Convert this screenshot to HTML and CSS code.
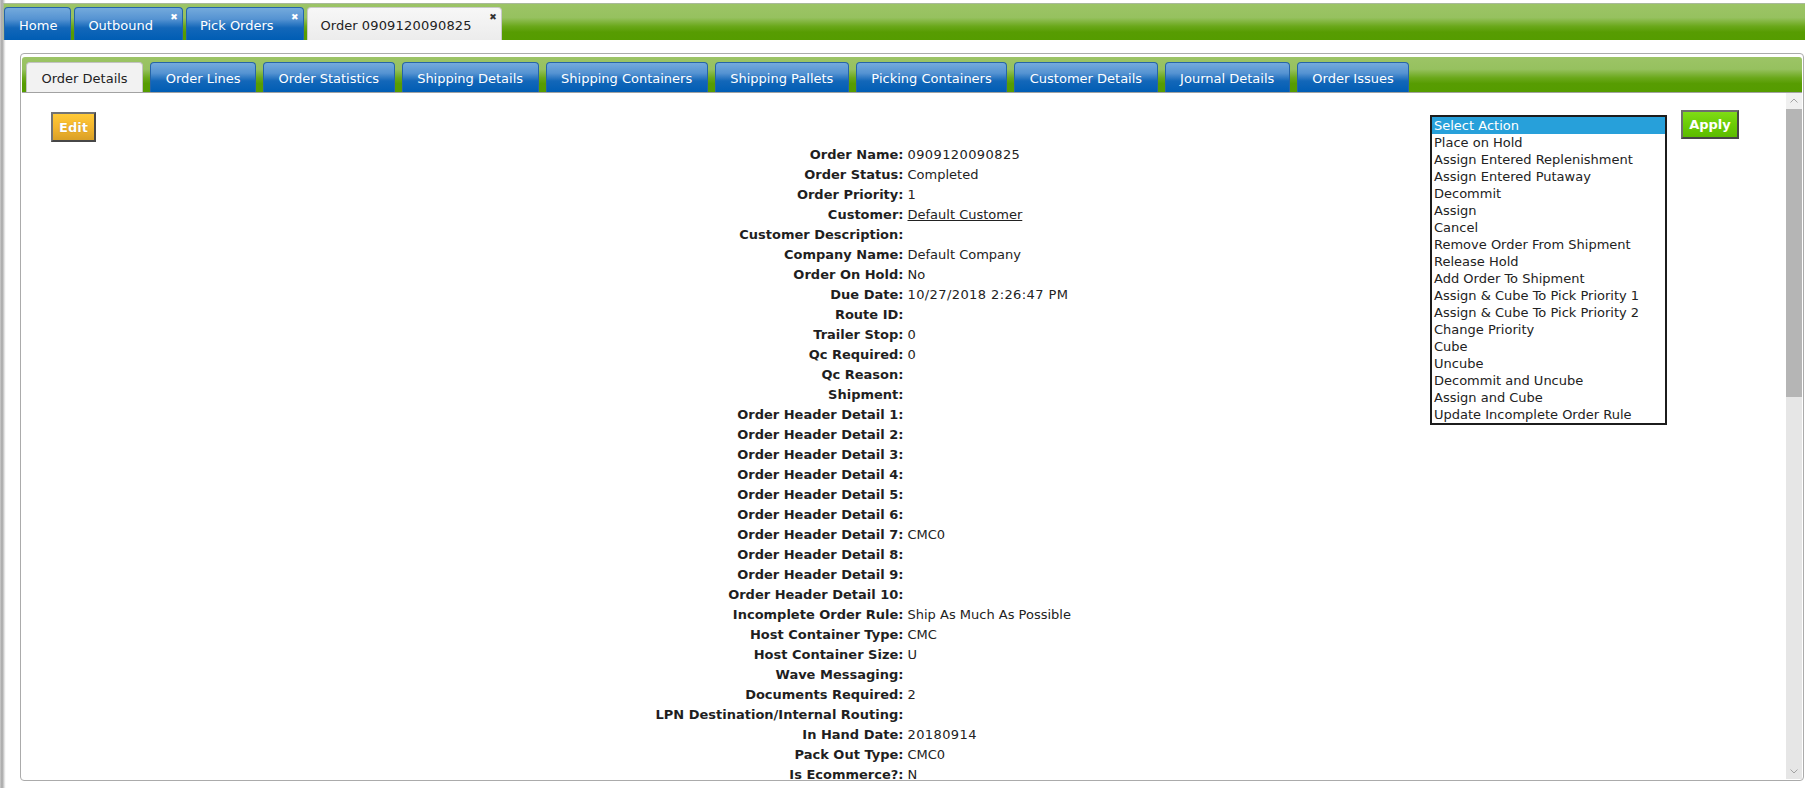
FILE: index.html
```html
<!DOCTYPE html>
<html lang="en">
<head>
<meta charset="utf-8">
<title>Order 0909120090825</title>
<link rel="stylesheet" href="styles.css">
</head>
<body>
  <nav class="topbar">
    <a class="ttab">Home</a>
    <a class="ttab closable">Outbound<span class="x">&#x2716;</span></a>
    <a class="ttab closable">Pick Orders<span class="x">&#x2716;</span></a>
    <a class="ttab closable active">Order <span class="num">0909120090825</span><span class="x">&#x2716;</span></a>
  </nav>

  <section class="panel">
    <div class="subtabs">
      <a class="stab active">Order Details</a>
      <a class="stab">Order Lines</a>
      <a class="stab">Order Statistics</a>
      <a class="stab">Shipping Details</a>
      <a class="stab">Shipping Containers</a>
      <a class="stab">Shipping Pallets</a>
      <a class="stab">Picking Containers</a>
      <a class="stab">Customer Details</a>
      <a class="stab">Journal Details</a>
      <a class="stab">Order Issues</a>
    </div>

    <div class="content">
      <div class="scroller">
        <div class="layout">
          <button class="btn-edit">Edit</button>

          <dl class="details">
            <dt>Order Name:</dt><dd class="num">0909120090825</dd>
            <dt>Order Status:</dt><dd>Completed</dd>
            <dt>Order Priority:</dt><dd>1</dd>
            <dt>Customer:</dt><dd><a class="link">Default Customer</a></dd>
            <dt>Customer Description:</dt><dd></dd>
            <dt>Company Name:</dt><dd>Default Company</dd>
            <dt>Order On Hold:</dt><dd>No</dd>
            <dt>Due Date:</dt><dd class="num">10/27/2018 2:26:47 PM</dd>
            <dt>Route ID:</dt><dd></dd>
            <dt>Trailer Stop:</dt><dd>0</dd>
            <dt>Qc Required:</dt><dd>0</dd>
            <dt>Qc Reason:</dt><dd></dd>
            <dt>Shipment:</dt><dd></dd>
            <dt>Order Header Detail 1:</dt><dd></dd>
            <dt>Order Header Detail 2:</dt><dd></dd>
            <dt>Order Header Detail 3:</dt><dd></dd>
            <dt>Order Header Detail 4:</dt><dd></dd>
            <dt>Order Header Detail 5:</dt><dd></dd>
            <dt>Order Header Detail 6:</dt><dd></dd>
            <dt>Order Header Detail 7:</dt><dd>CMC0</dd>
            <dt>Order Header Detail 8:</dt><dd></dd>
            <dt>Order Header Detail 9:</dt><dd></dd>
            <dt>Order Header Detail 10:</dt><dd></dd>
            <dt>Incomplete Order Rule:</dt><dd>Ship As Much As Possible</dd>
            <dt>Host Container Type:</dt><dd>CMC</dd>
            <dt>Host Container Size:</dt><dd>U</dd>
            <dt>Wave Messaging:</dt><dd></dd>
            <dt>Documents Required:</dt><dd>2</dd>
            <dt>LPN Destination/Internal Routing:</dt><dd></dd>
            <dt>In Hand Date:</dt><dd class="num">20180914</dd>
            <dt>Pack Out Type:</dt><dd>CMC0</dd>
            <dt>Is Ecommerce?:</dt><dd>N</dd>
          </dl>

          <div class="actions">
            <ul class="listbox">
              <li class="selected">Select Action</li>
              <li>Place on Hold</li>
              <li>Assign Entered Replenishment</li>
              <li>Assign Entered Putaway</li>
              <li>Decommit</li>
              <li>Assign</li>
              <li>Cancel</li>
              <li>Remove Order From Shipment</li>
              <li>Release Hold</li>
              <li>Add Order To Shipment</li>
              <li>Assign &amp; Cube To Pick Priority 1</li>
              <li>Assign &amp; Cube To Pick Priority 2</li>
              <li>Change Priority</li>
              <li>Cube</li>
              <li>Uncube</li>
              <li>Decommit and Uncube</li>
              <li>Assign and Cube</li>
              <li>Update Incomplete Order Rule</li>
            </ul>
            <button class="btn-apply">Apply</button>
          </div>
        </div>
      </div>

      <div class="vscroll" aria-hidden="true">
        <div class="sb-btn">
          <svg width="16" height="16" viewBox="0 0 16 16"><path d="M4.5 9.5L8 6l3.5 3.5" fill="none" stroke="#a3a3a3" stroke-width="1"/></svg>
        </div>
        <div class="sb-thumb"></div>
        <div class="sb-track"></div>
        <div class="sb-btn down">
          <svg width="16" height="16" viewBox="0 0 16 16"><path d="M4.5 6.5L8 10l3.5-3.5" fill="none" stroke="#a3a3a3" stroke-width="1"/></svg>
        </div>
      </div>
    </div>
  </section>
</body>
</html>
```

FILE: styles.css
```css
* { box-sizing: border-box; }

html { background: #fff; }

body {
  margin: 0;
  height: 100vh;
  display: flex;
  flex-direction: column;
  font-family: "DejaVu Sans", Verdana, sans-serif;
  font-size: 13px;
  color: #222;
  background: linear-gradient(90deg, #cdcdcd 0, #a4a4a4 2px, #d6d6d6 4px, #f4f4f4 5px, #fff 6px) no-repeat;
  background-color: #fff;
  overflow: hidden;
}

/* ---------- top tab strip ---------- */
.topbar {
  flex: none;
  margin: 3px 0 0 3px;
  height: 37px;
  display: flex;
  align-items: flex-end;
  gap: 3px;
  border-top: 1px solid #a9b99a;
  border-left: 1px solid #a9b99a;
  background: linear-gradient(to bottom, #9cc466 0%, #96c15f 38%, #6aa81a 62%, #579c02 78%, #559c00 100%);
}

.ttab {
  position: relative;
  display: block;
  height: 33px;
  padding: 2px 13px 0 14px;
  line-height: 31px;
  color: #fff;
  white-space: nowrap;
  border: 1px solid #2664a8;
  border-bottom: 0;
  border-radius: 4px 4px 0 0;
  background: linear-gradient(to bottom, #74aadc 0%, #5593d2 35%, #1367b9 62%, #005db4 100%);
}
.ttab.closable { padding-right: 29px; padding-left: 13px; }
.ttab.active {
  color: #222;
  border-color: #c9c9c9;
  background: linear-gradient(to bottom, #f7f7f7 0%, #ececec 100%);
}
.ttab .x {
  position: absolute;
  top: 4px;
  right: 4px;
  font-size: 9px;
  line-height: 10px;
  color: #fff;
}
.ttab.active .x { color: #333; }

.num { letter-spacing: 0.4px; }
.ttab .num { letter-spacing: 0.2px; }

/* ---------- panel ---------- */
.panel {
  flex: 1;
  min-height: 0;
  margin: 13px 1px 7px 20px;
  border: 1px solid #ababab;
  border-radius: 4px;
  padding: 3px 0 1px 0;
  display: flex;
  flex-direction: column;
  background: #fff;
}

.subtabs {
  flex: none;
  margin: 0 1px;
  height: 36px;
  display: flex;
  align-items: flex-end;
  gap: 7px;
  padding-left: 4px;
  border-bottom: 1px solid #a2a2a2;
  border-radius: 3px 3px 0 0;
  background: linear-gradient(to bottom, #9cc466 0%, #96c15f 35%, #6aa81a 60%, #579c02 76%, #559c00 100%);
}

.stab {
  display: block;
  height: 30px;
  padding: 2px 14.5px 0 14.5px;
  line-height: 28px;
  color: #fff;
  white-space: nowrap;
  border: 1px solid #2664a8;
  border-bottom: 0;
  border-radius: 4px 4px 0 0;
  background: linear-gradient(to bottom, #74aadc 0%, #5593d2 35%, #1367b9 62%, #005db4 100%);
}
.stab.active {
  color: #222;
  border-color: #c2c2c2;
  background: #f2f2f2;
}

/* ---------- content + scrollbar ---------- */
.content {
  flex: 1;
  min-height: 0;
  margin: 0 1px 0 0;
  display: flex;
}

.scroller {
  flex: 1;
  min-width: 0;
  overflow: hidden;
}

.vscroll {
  flex: none;
  width: 16px;
  display: flex;
  flex-direction: column;
  background: #e6e6e6;
}
.sb-btn { height: 16px; flex: none; background: #f0f0f0; }
.sb-btn.down { background: #e6e6e6; }
.sb-btn svg { display: block; }
.sb-thumb { height: 288px; flex: none; background: #b5b5b5; }
.sb-track { flex: 1; }

.layout {
  display: grid;
  grid-template-columns: 1fr 1fr;
  grid-template-rows: auto auto;
  padding: 17px 0 0 0;
}

.btn-edit {
  grid-column: 1;
  grid-row: 1;
  justify-self: start;
  margin: 2px 0 3px 30px;
  width: 45px;
  height: 30px;
  padding: 0;
  font: bold 13px "DejaVu Sans", Verdana, sans-serif;
  color: #fff;
  text-shadow: 0 0 1px rgba(120, 80, 0, 0.5);
  border: 2px solid;
  border-color: #737373 #474747 #474747 #737373;
  background: linear-gradient(to bottom, #ffc936 0%, #f4b62e 50%, #d9a026 100%);
}

.details {
  grid-column: 1 / span 2;
  grid-row: 2;
  margin: 0;
  display: grid;
  grid-template-columns: 1fr 1fr;
  grid-auto-rows: 20px;
  line-height: 20px;
}
.details dt {
  grid-column: 1;
  text-align: right;
  font-weight: bold;
  font-size: 13px;
  color: #1f1f1f;
  white-space: nowrap;
}
.details dd {
  grid-column: 2;
  margin: 0;
  padding-left: 4px;
  white-space: nowrap;
  color: #222;
}
.link { color: #222; text-decoration: underline; }

.actions {
  grid-column: 2;
  grid-row: 1 / span 2;
  justify-self: end;
  align-self: start;
  margin-right: 47px;
  display: flex;
  align-items: flex-start;
  gap: 14px;
  position: relative;
  z-index: 1;
}

.listbox {
  margin: 5px 0 0 0;
  padding: 0;
  list-style: none;
  width: 237px;
  border: 2px solid #1c1c1c;
  background: #fff;
}
.listbox li {
  height: 17px;
  line-height: 17px;
  padding-left: 2px;
  color: #222;
  white-space: nowrap;
}
.listbox li.selected {
  background: #27a0da;
  color: #fff;
}

.btn-apply {
  width: 58px;
  height: 29px;
  padding: 0;
  font: bold 13px "DejaVu Sans", Verdana, sans-serif;
  color: #fff;
  border: 2px solid;
  border-color: #6e6e6e #464646 #464646 #6e6e6e;
  background: linear-gradient(to bottom, #7fdc16 0%, #6bcc06 50%, #5cbb00 100%);
}
```
